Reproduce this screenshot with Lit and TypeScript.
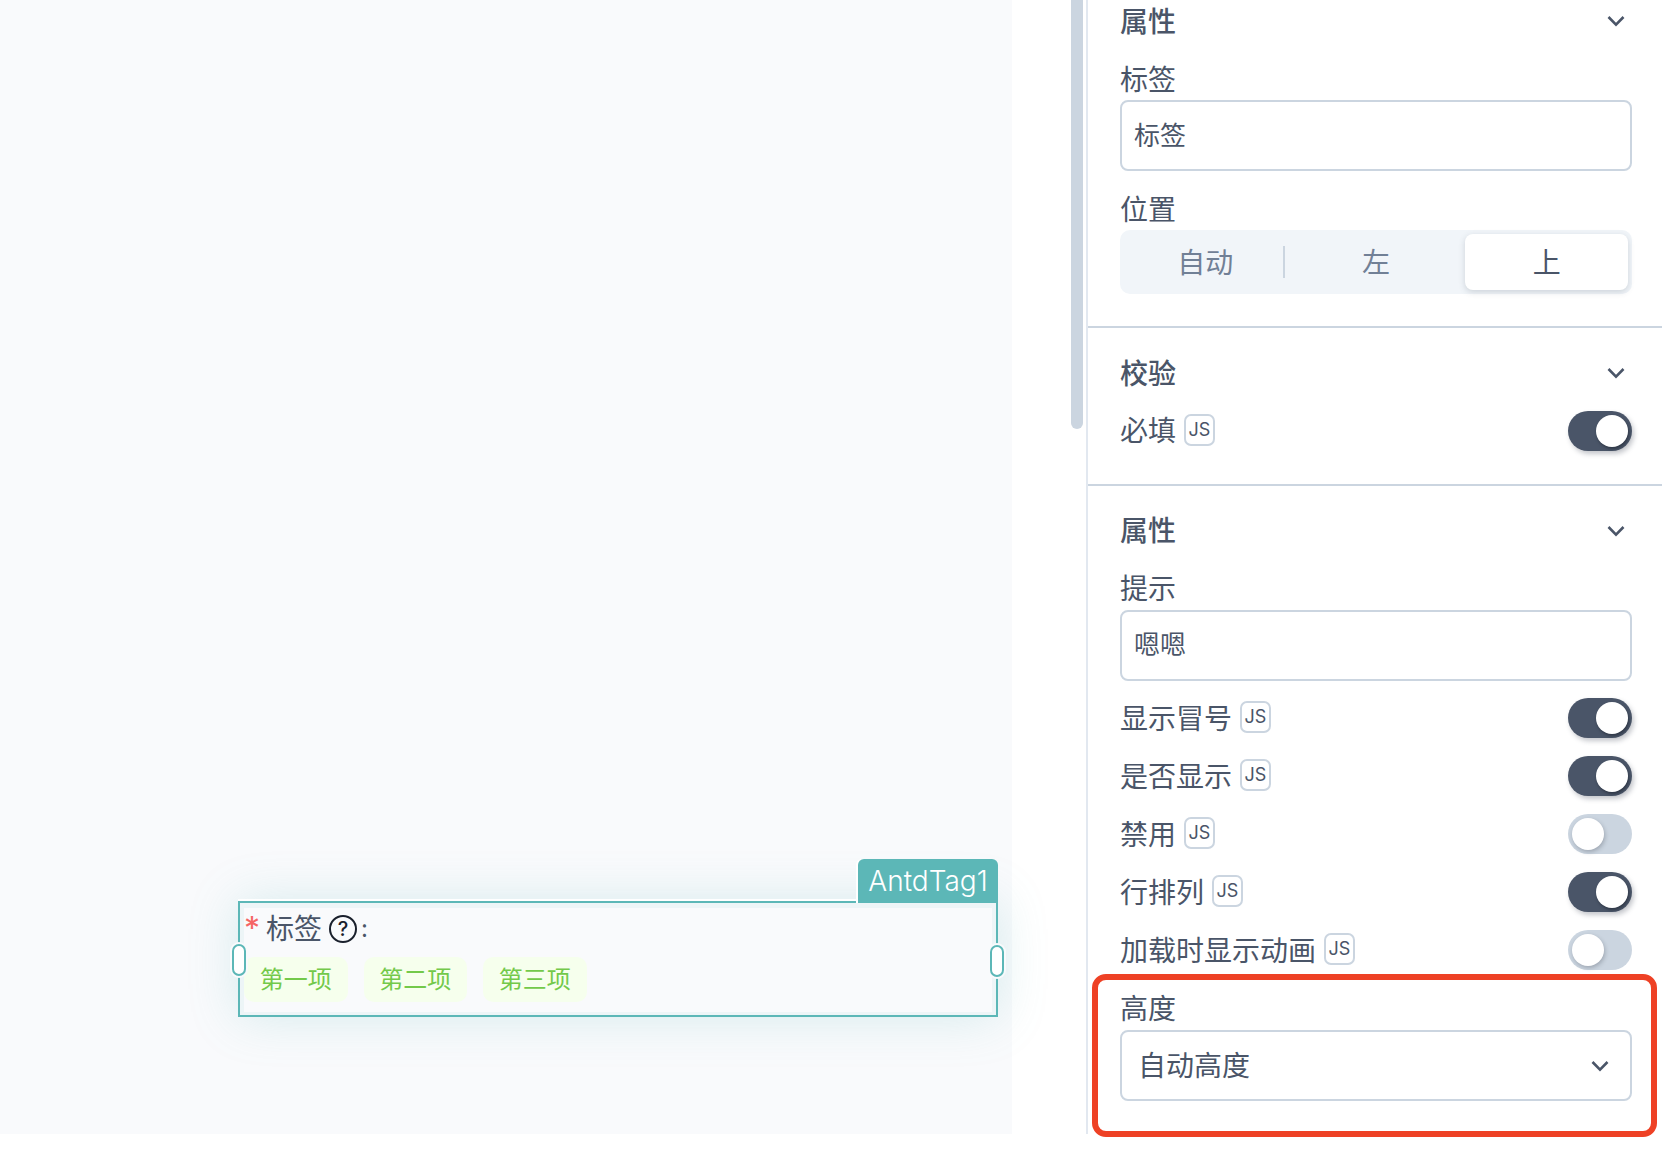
import { LitElement, html, css } from "lit";
import { customElement } from "lit/decorators.js";

const chevron = html`<svg class="chev" viewBox="0 0 18 12" width="18" height="12" aria-hidden="true"><path d="M1.5 2 L9 9.6 L16.5 2" fill="none" stroke="#4a5568" stroke-width="2.6"/></svg>`;

const rows: [string, boolean][] = [
  ["显示冒号", true],
  ["是否显示", true],
  ["禁用", false],
  ["行排列", true],
  ["加载时显示动画", false],
];

@customElement("app-root")
export class AppRoot extends LitElement {
  static styles = css`
    :host {
      display: block;
      width: 1662px;
      height: 1166px;
      background: #fff;
      overflow: hidden;
      position: relative;
      font-family: Inter, "Noto Sans CJK SC", sans-serif;
      color: #4a5568;
    }
    .main { display: flex; height: 1134px; align-items: flex-start; }
    .canvas {
      width: 1012px;
      height: 1134px;
      flex: none;
      box-sizing: border-box;
      background: #f9fafc;
      padding: 901px 0 0 238px;
    }
    .frame {
      position: relative;
      box-sizing: border-box;
      width: 760px;
      height: 116px;
      border: 2px solid #5cb7b7;
      padding: 4px;
      background: #edf5f7;
      box-shadow: 0 -2px 0 #fff, 0 0 50px rgba(92, 183, 183, 0.22);
    }
    .inner { height: 104px; background: #f9fafc; }
    .form-label { display: flex; align-items: center; height: 42px; margin-top: 1px; font-size: 28px; line-height: 42px; }
    .star { color: #f56565; width: 22px; font-size: 32px; flex: none; margin-top: 0; }
    .help {
      box-sizing: border-box;
      width: 28px; height: 28px;
      margin: 0 4px 0 7px;
      border: 2px solid #1a202c;
      border-radius: 50%;
      color: #1a202c;
      font-size: 20px;
      font-weight: 500;
      line-height: 24px;
      text-align: center;
      flex: none;
    }
    .colon { font-size: 24px; line-height: 42px; }
    .tags { display: flex; gap: 16px; margin-top: 7px; }
    .tag {
      width: 103.5px;
      height: 45px;
      line-height: 46px;
      text-align: center;
      font-size: 24px;
      color: #73c94a;
      background: #f6ffed;
      border-radius: 10px;
    }
    .tab {
      position: absolute;
      right: -2px;
      top: -44px;
      box-sizing: border-box;
      width: 140px;
      height: 44px;
      display: flex;
      align-items: center;
      justify-content: center;
      background: #5cb7b7;
      color: #fff;
      font-size: 28px;
      font-weight: 300;
      border-radius: 6px 6px 0 0;
      box-shadow: -2px 0 0 #fff;
    }
    .handle {
      position: absolute;
      box-sizing: border-box;
      width: 14px;
      height: 32px;
      background: #fff;
      border: 2px solid #5cb7b7;
      border-radius: 7px;
      box-shadow: 0 0 0 2px #f9fafc;
    }
    .handle.l { left: -8px; top: 41px; }
    .handle.r { right: -8px; top: 42px; }
    .rail {
      flex: none;
      margin-left: 59px;
      width: 12px;
      height: 429px;
      background: #cbd5e0;
      border-radius: 0 0 6px 6px;
    }
    .panel {
      flex: none;
      margin-left: 3px;
      width: 576px;
      height: 1134px;
      box-sizing: border-box;
      border-left: 2px solid #e2e8f0;
    }
    .sec { padding: 24px 30px 32px 32px; border-bottom: 2px solid #cbd5e0; }
    .sec.first { padding-top: 0; }
    .sec.check { padding-bottom: 33px; }
    .sec.last { border-bottom: 0; }
    .title {
      display: flex;
      align-items: center;
      justify-content: space-between;
      height: 42px;
      font-size: 28px;
      font-weight: 500;
      padding-right: 7px;
    }
    .title span { margin-top: -3px; }
    .sec.last .title span { margin-top: -4px; }
    .label { height: 42px; line-height: 44px; font-size: 28px; margin-top: 16px; }
    .sec.last .title + .label { line-height: 42px; }
    .box + .label { margin-top: 17px; }
    .box {
      box-sizing: border-box;
      width: 512px;
      height: 71px;
      border: 2px solid #cbd5e0;
      border-radius: 8px;
      background: #fff;
      padding-left: 12px;
      font-size: 26px;
      line-height: 67px;
    }
    .sec.last .label + .box:not(.select) { line-height: 65px; }
    .select {
      display: flex;
      align-items: center;
      justify-content: space-between;
      font-size: 28px;
      padding: 0 21px 0 16px;
    }
    .select span { margin-top: 2px; }
    .seg {
      display: grid;
      grid-template-columns: repeat(3, 1fr);
      gap: 8px;
      box-sizing: border-box;
      width: 512px;
      height: 64px;
      padding: 4px;
      background: #f1f5f9;
      border-radius: 10px;
    }
    .opt {
      position: relative;
      height: 56px;
      line-height: 58px;
      text-align: center;
      font-size: 28px;
      color: #718096;
    }
    .opt.div::after {
      content: "";
      position: absolute;
      right: 2px;
      top: 12px;
      width: 2px;
      height: 32px;
      background: #cbd5e0;
    }
    .opt.on {
      background: #fff;
      color: #4a5568;
      border-radius: 8px;
      box-shadow: 0 2px 6px rgba(74, 85, 104, 0.22);
    }
    .row { display: flex; align-items: center; height: 40px; font-size: 28px; }
    .row > span:first-child { margin-top: -2px; }
    .sec.check .row { margin-top: 17px; }
    .sec.check .row > span:first-child { margin-top: -4px; }
    .list { display: flex; flex-direction: column; gap: 18px; margin-top: 17px; }
    .js {
      box-sizing: border-box;
      width: 31px;
      height: 32px;
      margin: -2px 0 0 8px;
      border: 2px solid #cbd5e0;
      border-radius: 7px;
      font-size: 18px;
      line-height: 27px;
      text-align: center;
      flex: none;
    }
    .sw {
      margin-left: auto;
      box-sizing: border-box;
      width: 64px;
      height: 40px;
      padding: 4px;
      border-radius: 20px;
      background: #cbd5e0;
      display: flex;
      flex: none;
    }
    .sw.on {
      background: #4a5568;
      justify-content: flex-end;
      box-shadow: 2px 3px 5px rgba(45, 55, 72, 0.28);
    }
    .knob {
      width: 32px;
      height: 32px;
      border-radius: 50%;
      background: #fff;
      box-shadow: 1px 2px 4px rgba(26, 32, 44, 0.25);
    }
    .sw.on .knob { box-shadow: 1px 2px 3px rgba(26, 32, 44, 0.55); }
    .list + .label { margin-top: 18px; line-height: 42px; }
    .note {
      position: absolute;
      left: 1092px;
      top: 974px;
      box-sizing: border-box;
      width: 565px;
      height: 163px;
      border: 6px solid #ee4125;
      border-radius: 14px;
      pointer-events: none;
    }
  `;

  private js() {
    return html`<span class="js">JS</span>`;
  }

  private sw(on: boolean) {
    return html`<span class="sw ${on ? "on" : ""}"><span class="knob"></span></span>`;
  }

  render() {
    return html`
      <div class="main">
        <div class="canvas">
          <div class="frame">
            <div class="tab">AntdTag1</div>
            <div class="inner">
              <div class="form-label">
                <span class="star">*</span><span>标签</span><span class="help">?</span><span class="colon">:</span>
              </div>
              <div class="tags">
                ${["第一项", "第二项", "第三项"].map((t) => html`<span class="tag">${t}</span>`)}
              </div>
            </div>
            <span class="handle l"></span>
            <span class="handle r"></span>
          </div>
        </div>
        <div class="rail"></div>
        <div class="panel">
          <section class="sec first">
            <div class="title"><span>属性</span>${chevron}</div>
            <div class="label">标签</div>
            <div class="box">标签</div>
            <div class="label">位置</div>
            <div class="seg">
              <div class="opt div">自动</div>
              <div class="opt">左</div>
              <div class="opt on">上</div>
            </div>
          </section>
          <section class="sec check">
            <div class="title"><span>校验</span>${chevron}</div>
            <div class="row"><span>必填</span>${this.js()}${this.sw(true)}</div>
          </section>
          <section class="sec last">
            <div class="title"><span>属性</span>${chevron}</div>
            <div class="label">提示</div>
            <div class="box">嗯嗯</div>
            <div class="list">
              ${rows.map(([t, on]) => html`<div class="row"><span>${t}</span>${this.js()}${this.sw(on)}</div>`)}
            </div>
            <div class="label">高度</div>
            <div class="box select"><span>自动高度</span>${chevron}</div>
          </section>
        </div>
      </div>
      <div class="note"></div>
    `;
  }
}
